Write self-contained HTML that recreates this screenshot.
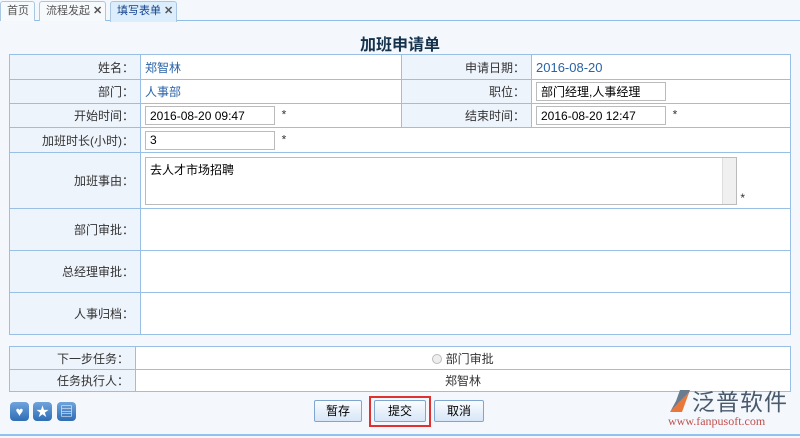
<!DOCTYPE html>
<html><head><meta charset="utf-8"><style>
*{box-sizing:border-box;margin:0;padding:0}
body{width:800px;height:438px;background:#f4f8fd;font-family:"Liberation Sans","Noto Sans CJK SC",sans-serif;font-size:12px;color:#333;position:relative;overflow:hidden}
.tabs{position:absolute;left:0;top:0;width:800px;height:21px;background:#f4f8fd;border-bottom:1px solid #8fbde6}
.tab{position:absolute;top:1px;height:20px;border:1px solid #a9c7e3;border-bottom:none;border-radius:3px 3px 0 0;background:#f7fafd;color:#555;line-height:18px;padding-left:6px;font-size:11px;white-space:nowrap}
.tab b{font-weight:bold;color:#555;margin-left:3px;font-size:11px}
.tab.on{background:#dceefc;color:#15428b;height:21px}
h1{position:absolute;top:31px;left:0;width:800px;text-align:center;font-size:16px;font-weight:bold;color:#15324d}
table{position:absolute;border-collapse:collapse;background:#fff}
td{border:1px solid #99bfe4;padding:0 4px;white-space:nowrap}
td.l{background:#eef4fc;text-align:right;padding-right:6px}
.v{color:#2a63a8}
input.t{height:19px;border:1px solid #bbb;font:12px "Liberation Sans","Noto Sans CJK SC",sans-serif;padding-left:4px;color:#000;vertical-align:middle;background:#fff}
.btn{position:absolute;top:400px;height:22px;border:1px solid #7fa6cf;border-radius:2px;background:linear-gradient(#fafcff,#d7e6f7);text-align:center;line-height:20px;font-size:12px;color:#000}
.ic{position:absolute;top:402px;width:19px;height:19px;border-radius:4px;background:linear-gradient(#6fa4dc,#2f6db5);color:#fff;text-align:center;line-height:19px;font-size:13px}
</style></head><body>
<div class="tabs">
<div class="tab" style="left:0;width:35px">首页</div>
<div class="tab" style="left:39px;width:67px">流程发起<b>✕</b></div>
<div class="tab on" style="left:110px;width:67px">填写表单<b>✕</b></div>
</div>
<h1>加班申请单</h1>
<table style="left:9px;top:54px;width:782px">
<colgroup><col style="width:131px"><col style="width:261px"><col style="width:130px"><col></colgroup>
<tr style="height:25px"><td class="l">姓名：</td><td class="v">郑智林</td><td class="l">申请日期：</td><td class="v" style="font-size:13px">2016-08-20</td></tr>
<tr style="height:24px"><td class="l">部门：</td><td class="v">人事部</td><td class="l">职位：</td><td><input class="t" style="width:130px" value="部门经理,人事经理"></td></tr>
<tr style="height:24px"><td class="l">开始时间：</td><td><input class="t" style="width:130px" value="2016-08-20 09:47"> &nbsp;*</td><td class="l">结束时间：</td><td><input class="t" style="width:130px" value="2016-08-20 12:47"> &nbsp;*</td></tr>
<tr style="height:25px"><td class="l">加班时长(小时)：</td><td colspan="3"><input class="t" style="width:130px" value="3"> &nbsp;*</td></tr>
<tr style="height:56px"><td class="l">加班事由：</td><td colspan="3"><div style="display:inline-block;width:592px;height:48px;border:1px solid #bbb;vertical-align:middle;position:relative;padding:3px 4px;color:#000">去人才市场招聘<div style="position:absolute;right:0;top:0;width:14px;height:46px;background:#f0f0f0;border-left:1px solid #ddd"></div></div> <span style="vertical-align:bottom">*</span></td></tr>
<tr style="height:42px"><td class="l">部门审批：</td><td colspan="3"></td></tr>
<tr style="height:42px"><td class="l">总经理审批：</td><td colspan="3"></td></tr>
<tr style="height:42px"><td class="l">人事归档：</td><td colspan="3"></td></tr>
</table>
<table style="left:9px;top:346px;width:782px">
<colgroup><col style="width:126px"><col></colgroup>
<tr style="height:23px"><td class="l">下一步任务：</td><td style="text-align:center"><span style="display:inline-block;width:10px;height:10px;border:1px solid #bbb;border-radius:50%;vertical-align:-1px;background:#eee"></span> 部门审批</td></tr>
<tr style="height:22px"><td class="l">任务执行人：</td><td style="text-align:center">郑智林</td></tr>
</table>
<div class="ic" style="left:10px">♥</div><div class="ic" style="left:33px">★</div><div class="ic" style="left:57px">▤</div>
<div class="btn" style="left:314px;width:48px">暂存</div>
<div style="position:absolute;left:369px;top:396px;width:62px;height:31px;border:2px solid #e03030"></div>
<div class="btn" style="left:374px;width:52px">提交</div>
<div class="btn" style="left:434px;width:50px">取消</div>
<div style="position:absolute;left:670px;top:390px;width:20px;height:22px;background:linear-gradient(135deg,#6a7d90 50%,#e9773a 50%);clip-path:polygon(50% 0,100% 0,60% 100%,0 100%,30% 50%)"></div>
<div style="position:absolute;left:692px;top:386px;font-size:23px;color:#4a5a6d;letter-spacing:1px;font-family:'Noto Sans CJK SC',sans-serif;line-height:28px">泛普软件</div>
<div style="position:absolute;left:668px;top:414px;font-size:12px;color:#c0504d;font-family:'Liberation Serif',serif">www.fanpusoft.com</div>
<div style="position:absolute;left:0;top:434px;width:800px;height:2px;background:#8fc3ee"></div>
</body></html>
